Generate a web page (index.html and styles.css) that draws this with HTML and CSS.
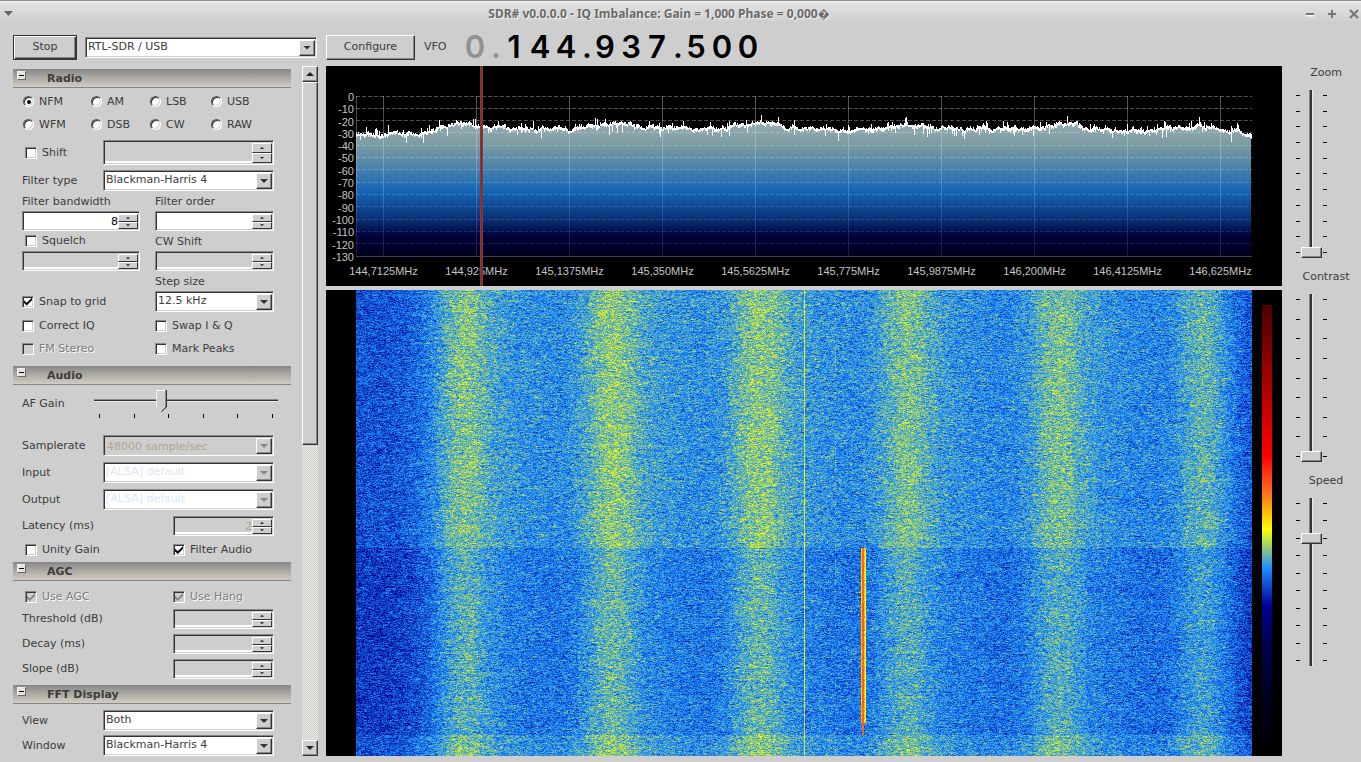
FILE: index.html
```html
<!DOCTYPE html>
<html lang="en">
<head>
<meta charset="utf-8">
<meta name="viewport" content="width=device-width, initial-scale=1">
<title>SDR#</title>
<link rel="stylesheet" href="styles.css">
</head>
<body>
<header class="titlebar">
  <button class="win-btn" aria-label="Window menu"><svg width="10" height="6" viewBox="0 0 10 6"><path d="M1 0h9L5.500 5z" fill="#666"/></svg></button>
  <h1 class="title">SDR# v0.0.0.0 - IQ Imbalance: Gain = 1,000 Phase = 0,000�</h1>
  <div class="win-controls">
    <button class="win-btn" aria-label="Minimize"><svg width="10" height="10" viewBox="0 0 10 10"><path d="M1 6.500h8" stroke="#fff" stroke-width="2"/><path d="M1 5h8" stroke="#777" stroke-width="2"/></svg></button>
    <button class="win-btn" aria-label="Maximize"><svg width="10" height="10" viewBox="0 0 10 10"><path d="M1 5h8M5 1v8" stroke="#777" stroke-width="2"/></svg></button>
    <button class="win-btn" aria-label="Close"><svg width="10" height="10" viewBox="0 0 10 10"><path d="M1 1l8 8M9 1l-8 8" stroke="#777" stroke-width="2.200"/></svg></button>
  </div>
</header>

<div class="toolbar">
  <button class="btn btn-default">Stop</button>
  <div class="combo combo-device"><select aria-label="Device"><option>RTL-SDR / USB</option></select><span class="combo-arrow"></span></div>
  <button class="btn btn-configure">Configure</button>
  <span class="vfo-label">VFO</span>
  <div class="vfo"><span class="digit dim">0</span><span class="point dim">.</span><span class="digit">1</span><span class="digit">4</span><span class="digit">4</span><span class="point">.</span><span class="digit">9</span><span class="digit">3</span><span class="digit">7</span><span class="point">.</span><span class="digit">5</span><span class="digit">0</span><span class="digit">0</span></div>
</div>

<main class="workspace">
  <aside class="sidebar">
    <div class="settings">
      <section class="group">
        <h2 class="group-head"><span class="collapse"></span>Radio</h2>
        <div class="group-body">
          <div class="modes">
            <label class="opt"><input type="radio" name="mode" checked>NFM</label>
            <label class="opt"><input type="radio" name="mode">AM</label>
            <label class="opt"><input type="radio" name="mode">LSB</label>
            <label class="opt"><input type="radio" name="mode">USB</label>
            <label class="opt"><input type="radio" name="mode">WFM</label>
            <label class="opt"><input type="radio" name="mode">DSB</label>
            <label class="opt"><input type="radio" name="mode">CW</label>
            <label class="opt"><input type="radio" name="mode">RAW</label>
          </div>
          <div class="row row-shift">
            <label class="opt indent"><input type="checkbox">Shift</label>
            <div class="spin off wide tall"><input type="text" aria-label="Shift" disabled><span class="spin-btns"><button aria-label="Up" class="up"></button><button aria-label="Down" class="down"></button></span></div>
          </div>
          <div class="row row-type">
            <label for="ftype">Filter type</label>
            <div class="combo wide"><select id="ftype"><option>Blackman-Harris 4</option></select><span class="combo-arrow"></span></div>
          </div>
          <div class="pairs">
            <label for="fbw" class="cap">Filter bandwidth</label>
            <label for="ford" class="cap">Filter order</label>
            <div class="spin"><input id="fbw" type="text" value="8"><span class="spin-btns"><button aria-label="Up" class="up"></button><button aria-label="Down" class="down"></button></span></div>
            <div class="spin"><input id="ford" type="text"><span class="spin-btns"><button aria-label="Up" class="up"></button><button aria-label="Down" class="down"></button></span></div>
            <label class="opt cap indent"><input type="checkbox">Squelch</label>
            <label for="cws" class="cap">CW Shift</label>
            <div class="spin off"><input type="text" aria-label="Squelch" disabled><span class="spin-btns"><button aria-label="Up" class="up"></button><button aria-label="Down" class="down"></button></span></div>
            <div class="spin off"><input id="cws" type="text" disabled><span class="spin-btns"><button aria-label="Up" class="up"></button><button aria-label="Down" class="down"></button></span></div>
            <span class="cap"></span>
            <label for="step" class="cap">Step size</label>
            <label class="opt"><input type="checkbox" checked>Snap to grid</label>
            <div class="combo"><select id="step"><option>12.5 kHz</option></select><span class="combo-arrow"></span></div>
          </div>
          <div class="checks">
            <label class="opt"><input type="checkbox">Correct IQ</label>
            <label class="opt"><input type="checkbox">Swap I &amp; Q</label>
            <label class="opt muted"><input type="checkbox" disabled>FM Stereo</label>
            <label class="opt"><input type="checkbox">Mark Peaks</label>
          </div>
        </div>
      </section>

      <section class="group">
        <h2 class="group-head"><span class="collapse"></span>Audio</h2>
        <div class="group-body">
          <div class="row row-gain">
            <label for="gain">AF Gain</label>
            <div class="hslider">
              <input id="gain" type="range" min="0" max="100" value="36">
              <div class="hticks"><i></i><i></i><i></i><i></i><i></i><i></i></div>
            </div>
          </div>
          <div class="stack">
            <div class="row"><label for="rate">Samplerate</label><div class="combo wide off"><select id="rate" disabled><option>48000 sample/sec</option></select><span class="combo-arrow"></span></div></div>
            <div class="row"><label for="inp">Input</label><div class="combo wide pale"><select id="inp" disabled><option>[ALSA] default</option></select><span class="combo-arrow"></span></div></div>
            <div class="row"><label for="outp">Output</label><div class="combo wide pale"><select id="outp" disabled><option>[ALSA] default</option></select><span class="combo-arrow"></span></div></div>
            <div class="row"><label for="lat">Latency (ms)</label><div class="spin off narrow"><input id="lat" type="text" value="2" disabled><span class="spin-btns"><button aria-label="Up" class="up"></button><button aria-label="Down" class="down"></button></span></div></div>
          </div>
          <div class="halves">
            <label class="opt indent"><input type="checkbox">Unity Gain</label>
            <label class="opt"><input type="checkbox" checked>Filter Audio</label>
          </div>
        </div>
      </section>

      <section class="group group-agc">
        <h2 class="group-head"><span class="collapse"></span>AGC</h2>
        <div class="group-body">
          <div class="halves">
            <label class="opt indent muted"><input type="checkbox" checked disabled>Use AGC</label>
            <label class="opt muted"><input type="checkbox" checked disabled>Use Hang</label>
          </div>
          <div class="stack tight">
            <div class="row"><label for="thr">Threshold (dB)</label><div class="spin off narrow"><input id="thr" type="text" disabled><span class="spin-btns"><button aria-label="Up" class="up"></button><button aria-label="Down" class="down"></button></span></div></div>
            <div class="row"><label for="dec">Decay (ms)</label><div class="spin off narrow"><input id="dec" type="text" disabled><span class="spin-btns"><button aria-label="Up" class="up"></button><button aria-label="Down" class="down"></button></span></div></div>
            <div class="row"><label for="slo">Slope (dB)</label><div class="spin off narrow"><input id="slo" type="text" disabled><span class="spin-btns"><button aria-label="Up" class="up"></button><button aria-label="Down" class="down"></button></span></div></div>
          </div>
        </div>
      </section>

      <section class="group">
        <h2 class="group-head"><span class="collapse"></span>FFT Display</h2>
        <div class="group-body">
          <div class="stack fft">
            <div class="row"><label for="view">View</label><div class="combo wide"><select id="view"><option>Both</option></select><span class="combo-arrow"></span></div></div>
            <div class="row"><label for="win">Window</label><div class="combo wide"><select id="win"><option>Blackman-Harris 4</option></select><span class="combo-arrow"></span></div></div>
          </div>
        </div>
      </section>
    </div>
    <div class="scrollbar">
      <button class="sb-btn up" aria-label="Scroll up"></button>
      <div class="sb-thumb"></div>
      <div class="sb-track"></div>
      <button class="sb-btn down" aria-label="Scroll down"></button>
    </div>
  </aside>

  <div class="displays">
    <section class="spectrum" aria-label="Spectrum">
      <div class="y-axis"><span>0</span><span>-10</span><span>-20</span><span>-30</span><span>-40</span><span>-50</span><span>-60</span><span>-70</span><span>-80</span><span>-90</span><span>-100</span><span>-110</span><span>-120</span><span>-130</span></div>
      <div class="plot"><canvas id="fft"></canvas></div>
      <div class="x-axis"><span>144,7125MHz</span><span>144,925MHz</span><span>145,1375MHz</span><span>145,350MHz</span><span>145,5625MHz</span><span>145,775MHz</span><span>145,9875MHz</span><span>146,200MHz</span><span>146,4125MHz</span><span>146,625MHz</span></div>
      <div class="tuner"></div>
    </section>
    <section class="waterfall" aria-label="Waterfall">
      <div class="plot"><canvas id="fall"></canvas></div>
      <div class="scale"></div>
    </section>
  </div>

  <aside class="sliders">
    <div class="vgroup"><label for="zoom">Zoom</label>
      <div class="vslider"><div class="vticks"><i></i><i></i><i></i><i></i><i></i><i></i><i></i><i></i><i></i><i></i><i></i></div><input id="zoom" type="range" min="0" max="100" value="0"></div></div>
    <div class="vgroup"><label for="contrast">Contrast</label>
      <div class="vslider"><div class="vticks"><i></i><i></i><i></i><i></i><i></i><i></i><i></i><i></i><i></i></div><input id="contrast" type="range" min="0" max="100" value="0"></div></div>
    <div class="vgroup"><label for="speed">Speed</label>
      <div class="vslider"><div class="vticks"><i></i><i></i><i></i><i></i><i></i><i></i><i></i><i></i><i></i><i></i></div><input id="speed" type="range" min="0" max="9" value="7"></div></div>
  </aside>
</main>
<script src="plots.js"></script>
</body>
</html>
```

FILE: styles.css
```css
* { box-sizing: border-box; }

body {
  margin: 0;
  min-height: 100vh;
  display: flex;
  flex-direction: column;
  background: #cecece;
  color: #3c3c3c;
  font: 11px/14px "DejaVu Sans", sans-serif;
}

button, select, input { font: inherit; color: inherit; margin: 0; }

/* Title bar */
.titlebar {
  display: flex;
  align-items: center;
  height: 27px;
  padding: 0 2px 0 3px;
  border-top: 1px solid #8c8c8c;
  background: linear-gradient(#f4f4f4 0, #e2e2e2 2px, #cecece 22px);
}
.title {
  flex: 1;
  margin: 0;
  text-align: center;
  font: 700 12px/16px "Noto Sans", "Open Sans", sans-serif;
  color: #6a6a6a;
  text-shadow: 1px 1px 0 #f0f0f0;
}
.win-controls { display: flex; gap: 12px; }
.win-btn { display: flex; padding: 0; border: 0; background: none; }

/* Toolbar */
.toolbar {
  display: flex;
  align-items: center;
  height: 39px;
  padding: 1px 0 0 13px;
}
.btn {
  height: 25px;
  padding: 0;
  background: #cecece;
  border: 1px solid;
  border-color: #fff #333 #333 #fff;
  box-shadow: inset -1px -1px 0 #888;
}
.btn-default { width: 64px; border: 1px solid #333; box-shadow: inset 1px 1px 0 #fff, inset -1px -1px 0 #333, inset -2px -2px 0 #888; }
.btn-configure { width: 89px; margin-left: 9px; }
.combo-device { width: 232px; margin-left: 8px; }
.vfo-label { width: 38px; margin-left: 9px; }
.vfo { display: flex; font: 600 31px/32px Inter, "DejaVu Sans", sans-serif; color: #000; }
.digit { width: 26px; text-align: center; }
.point { width: 13px; text-align: right; }
.dim { color: #929292; }

/* Combo boxes and spinners */
.combo, .spin {
  display: flex;
  height: 20px;
  background: #fff;
  border: 1px solid;
  border-color: #888 #fff #fff #888;
  box-shadow: inset 1px 1px 0 #333, inset -1px -1px 0 #cecece;
  padding: 2px 1px 1px 2px;
}
.combo { height: 21px; padding-left: 1px; }
.combo select {
  flex: 1;
  min-width: 0;
  appearance: none;
  padding: 0 0 2px 1px;
  border: 0;
  background: none;
  opacity: 1;
}
.combo-arrow {
  flex: none;
  display: flex;
  width: 16px;
  background: #cecece;
  border: 1px solid;
  border-color: #fff #333 #333 #fff;
  box-shadow: inset -1px -1px 0 #888;
}
.combo-arrow::before {
  content: "";
  width: 8px;
  height: 4px;
  margin: auto;
  background: #333;
  clip-path: polygon(0 0, 100% 0, 50% 100%);
}
.combo.off { background: #cecece; color: #aea593; }
.combo.off select { padding: 1px 0 0 2px; }
.combo.pale { color: #dce6fa; }
.combo.off .combo-arrow::before, .combo.pale .combo-arrow::before { background: #888; }
.wide { width: 171px; }
.narrow { width: 101px; }
.tall { height: 25px; }
.spin input {
  flex: 1;
  min-width: 0;
  width: 0;
  padding: 0;
  border: 0;
  background: none;
  text-align: right;
  color: #000;
}
.spin.off { background: linear-gradient(#cecece, #cecece) no-repeat 0 0 / 100% calc(100% - 3px), #fff; }
.spin.off input { color: #aea593; }
.spin-btns { display: flex; flex-direction: column; width: 20px; }
.spin-btns button {
  flex: 1;
  display: flex;
  padding: 0;
  background: #cecece;
  border: 1px solid;
  border-color: #fff #333 #333 #fff;
}
.spin-btns button::before, .sb-btn::before {
  content: "";
  width: 4px;
  height: 2px;
  margin: auto;
  background: #222;
  clip-path: polygon(50% 0, 100% 100%, 0 100%);
}
.spin-btns .down::before, .sb-btn.down::before { clip-path: polygon(0 0, 100% 0, 50% 100%); }

/* Check boxes and radio buttons */
.opt { display: flex; align-items: center; gap: 5px; }
.opt input {
  appearance: none;
  flex: none;
  display: flex;
  width: 12px;
  height: 12px;
  background: #fff;
  border: 1px solid;
  border-color: #888 #fff #fff #888;
  box-shadow: inset 1px 1px 0 #333, inset -1px -1px 0 #cecece;
}
.opt input[type="radio"] { width: 11px; height: 11px; border-radius: 50%; border-color: #555 #fff #fff #555; }
.opt input:checked::before {
  content: "";
  width: 8px;
  height: 8px;
  margin: auto;
  background: #000;
  clip-path: polygon(0 35%, 35% 65%, 100% 0, 100% 35%, 35% 100%, 0 70%);
}
.opt input[type="radio"]:checked::before { width: 4px; height: 4px; border-radius: 50%; clip-path: none; }
.opt input:disabled { background: #cecece; }
.opt input:disabled::before { background: #888; }
.muted { color: #7c7c7c; text-shadow: 1px 1px 0 #fff; }
.indent { padding-left: 3px; }

/* Layout */
.workspace {
  flex: 1;
  display: grid;
  grid-template-columns: 305px minmax(0, 1fr) 79px;
  padding: 0 0 6px 13px;
}
.sidebar { display: flex; justify-content: space-between; }
.settings { width: 278px; padding-top: 3px; }
.group-head {
  display: flex;
  height: 19px;
  margin: 0;
  padding: 2px 4px 0;
  font: bold 11px/15px "DejaVu Sans", sans-serif;
  background: linear-gradient(#868686, #a6a49e 40%, #d2cdc4);
  border-bottom: 1px solid #868686;
}
.collapse {
  width: 9px;
  height: 9px;
  margin-right: 21px;
  border: 1px solid;
  border-color: #eee #666 #666 #eee;
  background: linear-gradient(#000, #000) no-repeat 1px 3px / 5px 1px, #e4e4e4;
}
.group-body { padding: 2px 17px 0 9px; }
.group + .group { margin-top: 6px; }
.group + .group-agc { margin-top: 2px; }
.row { display: flex; justify-content: space-between; align-items: center; }
.modes { display: grid; grid-template-columns: 68px 59px 61px 1fr; grid-auto-rows: 23px; padding-left: 1px; }
.row-shift { margin-top: 4px; }
.row-type { margin-top: 5px; }
.pairs { display: grid; grid-template-columns: 118px 119px; column-gap: 15px; }
.cap { height: 20px; line-height: 22px; }
.opt.cap { line-height: 14px; }
.checks { display: grid; grid-template-columns: 133px 1fr; grid-auto-rows: 23px; margin-top: 2px; }
.row-gain { height: 30px; margin-top: 2px; }
.hslider { width: 184px; margin-right: -4px; }
.hticks { display: flex; justify-content: space-between; padding: 0 5px; }
.hticks i { width: 1px; height: 4px; background: #000; }
.stack { display: grid; gap: 6px; margin-top: 16px; }
.stack.tight { gap: 5px; margin-top: 2px; }
.stack.fft { gap: 4px; margin-top: 4px; }
.halves { display: grid; grid-template-columns: 151px 1fr; grid-auto-rows: 20px; margin-top: 4px; }

/* Scroll bar */
.scrollbar {
  display: flex;
  flex-direction: column;
  width: 16px;
  background: repeating-conic-gradient(#ece9e4 0 25%, #cecece 0 50%) 0 0 / 2px 2px;
}
.sb-btn {
  display: flex;
  height: 16px;
  padding: 0;
  background: #cecece;
  border: 1px solid;
  border-color: #fff #333 #333 #fff;
  box-shadow: inset -1px -1px 0 #888;
}
.sb-btn::before { width: 8px; height: 4px; }
.sb-thumb { flex: 362; background: #cecece; border: 1px solid; border-color: #fff #333 #333 #fff; box-shadow: inset -1px -1px 0 #888; }
.sb-track { flex: 296; }

/* Displays */
.displays { display: flex; flex-direction: column; gap: 4px; padding-left: 8px; }
.spectrum, .waterfall {
  display: grid;
  grid-template-columns: 30px minmax(0, 1fr) 30px;
  min-height: 0;
  background: #000;
}
.spectrum {
  position: relative;
  flex: 220 1 0;
  grid-template-rows: 30px minmax(0, 1fr) 29px;
  font: 11px/12px "Liberation Sans", Arial, sans-serif;
  color: #c4c4c4;
}
.waterfall { flex: 466 1 0; grid-template-rows: minmax(0, 1fr); }
.y-axis {
  grid-area: 2 / 1;
  display: flex;
  flex-direction: column;
  justify-content: space-between;
  margin: -5px 0 -6px;
  padding-right: 2px;
  text-align: right;
}
.plot { min-height: 0; }
.spectrum .plot { grid-area: 2 / 2; }
.waterfall .plot { grid-area: 1 / 2; }
.plot canvas { display: block; width: 0; min-width: 100%; height: 0; min-height: 100%; }
.x-axis { grid-area: 3 / 1 / 4 / 4; display: flex; align-items: center; padding: 0 15px 1px 11px; }
.x-axis span { flex: 1 1 0; text-align: center; }
.tuner {
  position: absolute;
  top: 0;
  bottom: 0;
  left: 16.1%;
  width: 3px;
  background: linear-gradient(90deg, #505050 1px, #e00000 1px 2px, #505050 2px);
}
.scale {
  grid-area: 1 / 3;
  margin: 15px 10px;
  background: linear-gradient(#4b0000, #f00 34.600%, #ff6e1e 43%, #ff0 51.500%, #1e90ff 60.300%, #000091 69%, #000050 78%, #000020 90%, #000008);
}

/* Vertical sliders */
.sliders { display: flex; flex-direction: column; gap: 12px; }
.vgroup { width: 60px; margin-left: 14px; text-align: center; }
.vslider { display: grid; width: 31px; height: 168px; margin-top: 10px; }
.vslider > * { grid-area: 1 / 1; }
.vticks { display: flex; flex-direction: column; justify-content: space-between; padding: 5px 0; }
.vticks i { height: 1px; border: solid #000; border-width: 0 4px; }
input[type="range"] { appearance: none; display: block; background: none; }
.vslider input { writing-mode: vertical-lr; direction: rtl; width: 21px; height: 168px; margin: 0 auto; }
.vslider input::-webkit-slider-runnable-track {
  width: 21px;
  background: linear-gradient(90deg, #888 1px, #333 1px 3px, #ececec 3px) no-repeat 8px 0 / 4px 100%;
}
.vslider input::-webkit-slider-thumb {
  appearance: none;
  width: 21px;
  height: 11px;
  background: #cecece;
  border: 1px solid;
  border-color: #fff #333 #333 #fff;
  box-shadow: inset -1px -1px 0 #888;
}

/* Gain slider */
.hslider input { width: 100%; height: 24px; }
.hslider input::-webkit-slider-runnable-track {
  height: 24px;
  background: linear-gradient(#888 1px, #333 1px 2px, #ececec 2px) no-repeat 0 9px / 100% 3px;
}
.hslider input::-webkit-slider-thumb {
  appearance: none;
  width: 11px;
  height: 22px;
  clip-path: polygon(0 0, 100% 0, 100% 75%, 50% 100%, 0 75%);
  background:
    linear-gradient(45deg, transparent 50%, #cecece 50%) no-repeat 1px 17px / 4px 4px,
    linear-gradient(-45deg, transparent 50%, #cecece 50%) no-repeat 5px 17px / 4px 4px,
    linear-gradient(#cecece, #cecece) no-repeat 1px 1px / 8px 16px,
    linear-gradient(90deg, #fff 5px, #333 5px) no-repeat 0 17px / 11px 5px,
    linear-gradient(90deg, #fff 9px, #888 9px 10px, #333 10px);
}
```

FILE: plots.js
```js
// Signal envelope shared by both plots; u runs from 0 to 1 across the band.
var HUMPS = [
  [0.119, 0.48, 0.023], [0.284, 0.52, 0.023], [0.448, 0.50, 0.023],
  [0.613, 0.46, 0.022], [0.782, 0.48, 0.023], [0.943, 0.36, 0.020]
];

function smooth(a, b, x) {
  var t = Math.min(1, Math.max(0, (x - a) / (b - a)));
  return t * t * (3 - 2 * t);
}

function envelope(u) {
  var v = 0.56 + 0.32 * smooth(0.03, 0.12, u) - 0.45 * smooth(0.95, 1.01, u);
  v += 0.07 * Math.exp(-Math.pow((u - 0.4) / 0.3, 2));
  HUMPS.forEach(function (h) {
    v += h[1] * Math.exp(-Math.pow((u - h[0]) / h[2], 2) / 2);
    v += 0.12 * Math.exp(-Math.pow((u - h[0] - 0.05) / 0.035, 2) / 2);
  });
  return v;
}

function generator(seed) {
  return function () {
    seed = (seed + 0x6D2B79F5) | 0;
    var t = Math.imul(seed ^ (seed >>> 15), 1 | seed);
    t = (t + Math.imul(t ^ (t >>> 7), 61 | t)) ^ t;
    return ((t ^ (t >>> 14)) >>> 0) / 4294967296;
  };
}

function prepare(id) {
  var c = document.getElementById(id);
  c.width = c.clientWidth;
  c.height = c.clientHeight;
  return c;
}

function drawSpectrum() {
  var c = prepare('fft'), g = c.getContext('2d'), w = c.width, h = c.height;
  var rnd = generator(11), x, top = [], low = [];
  var drift = 0;
  for (x = 0; x < w; x++) {
    if (x % 2 === 0) drift = drift * 0.7 + (rnd() - 0.5) * 3.4;
    var y = 39 - 11 * (envelope(x / w) - 0.5) + drift;
    var up = rnd() < 0.12 ? rnd() * 8 : rnd() * 2;
    var down = rnd() < 0.14 ? rnd() * 10 : 1 + rnd() * 2;
    top.push(Math.round((y - up) * h / 161));
    low.push(Math.round((y + down) * h / 161));
  }
  var fill = g.createLinearGradient(0, 20, 0, h);
  fill.addColorStop(0, '#a0b0b8');
  fill.addColorStop(0.2, '#7c9ca2');
  fill.addColorStop(0.35, '#5085aa');
  fill.addColorStop(0.54, '#1464b4');
  fill.addColorStop(0.72, '#0a3478');
  fill.addColorStop(0.86, '#000037');
  fill.addColorStop(1, '#00001e');
  g.fillStyle = fill;
  for (x = 0; x < w - 1; x++) g.fillRect(x, top[x], 1, h - top[x]);

  var line = g.createLinearGradient(0, 0, 0, h);
  line.addColorStop(0, 'rgba(255,255,255,.32)');
  line.addColorStop(0.5, 'rgba(170,210,255,.32)');
  line.addColorStop(0.8, 'rgba(130,150,255,.22)');
  line.addColorStop(1, 'rgba(150,150,255,.16)');
  g.strokeStyle = line;
  g.setLineDash([4, 2]);
  for (var i = 0; i < 13; i++) {
    var gy = Math.floor(i * (h - 1) / 13) + 0.5;
    g.beginPath(); g.moveTo(0, gy); g.lineTo(w, gy); g.stroke();
  }
  g.setLineDash([]);
  for (i = 0; i < 10; i++) {
    var gx = Math.round(w * (27 + i * 93) / 896) + 0.5;
    g.beginPath(); g.moveTo(gx, 0); g.lineTo(gx, h); g.stroke();
  }
  g.beginPath(); g.moveTo(0.5, 0); g.lineTo(0.5, h); g.stroke();
  g.fillStyle = '#3c3c64';
  g.fillRect(0, h - 1, w, 1);

  g.fillStyle = '#fff';
  for (x = 0; x < w; x++) g.fillRect(x, top[x], 1, Math.max(2, low[x] - top[x]));
}

var STOPS = [[0, 0, 60], [0, 0, 145], [30, 144, 255], [255, 255, 0], [255, 110, 30], [255, 0, 0]];

function drawWaterfall() {
  var c = prepare('fall'), g = c.getContext('2d'), w = c.width, h = c.height;
  var img = g.createImageData(w, h), d = img.data, rnd = generator(77);
  var base = [], x, y;
  for (x = 0; x < w; x++) base.push(envelope(x / w));
  var carrier = Math.round(w * 0.5), faint = Math.round(w * 0.535), burst = Math.round(w * 0.566);
  var from = Math.round(h * 0.554), to = Math.round(h * 0.955), end = Math.round(h * 0.93);
  for (y = 0; y < h; y++) {
    var quiet = y >= from && y < to ? 0.17 : 0;
    var rowShift = (rnd() - 0.5) * 0.08 - quiet;
    var prev = 0;
    for (x = 0; x < w; x++) {
      var n = rnd() + rnd() + rnd() - 1.5;
      n = prev * 0.35 + n * 0.46;
      prev = n;
      var v = base[x] + rowShift + n;
      if (x === carrier) v = 1.8 + n * 0.3;
      if (x === faint && rnd() < 0.5) v += 0.3;
      if (y >= from && y < to) {
        if (x >= burst - 1 && x <= burst) v = 3.1 + n * 0.4;
        else if (y < end && x === burst + 1) v = 2.4 + n;
        else if (y < end && x === burst + 2) v = 2 + n * 0.4;
        else if (y < end && x === burst - 2) v = 2.4 + n;
      }
      v = Math.min(3.9, Math.max(-0.4, v)) + 1;
      var k = Math.floor(v), f = v - k, a = STOPS[k], b = STOPS[k + 1], o = (y * w + x) * 4;
      d[o] = a[0] + (b[0] - a[0]) * f;
      d[o + 1] = a[1] + (b[1] - a[1]) * f;
      d[o + 2] = a[2] + (b[2] - a[2]) * f;
      d[o + 3] = 255;
    }
  }
  g.putImageData(img, 0, 0);
}

function drawAll() { drawSpectrum(); drawWaterfall(); }
drawAll();
window.addEventListener('resize', drawAll);
```
